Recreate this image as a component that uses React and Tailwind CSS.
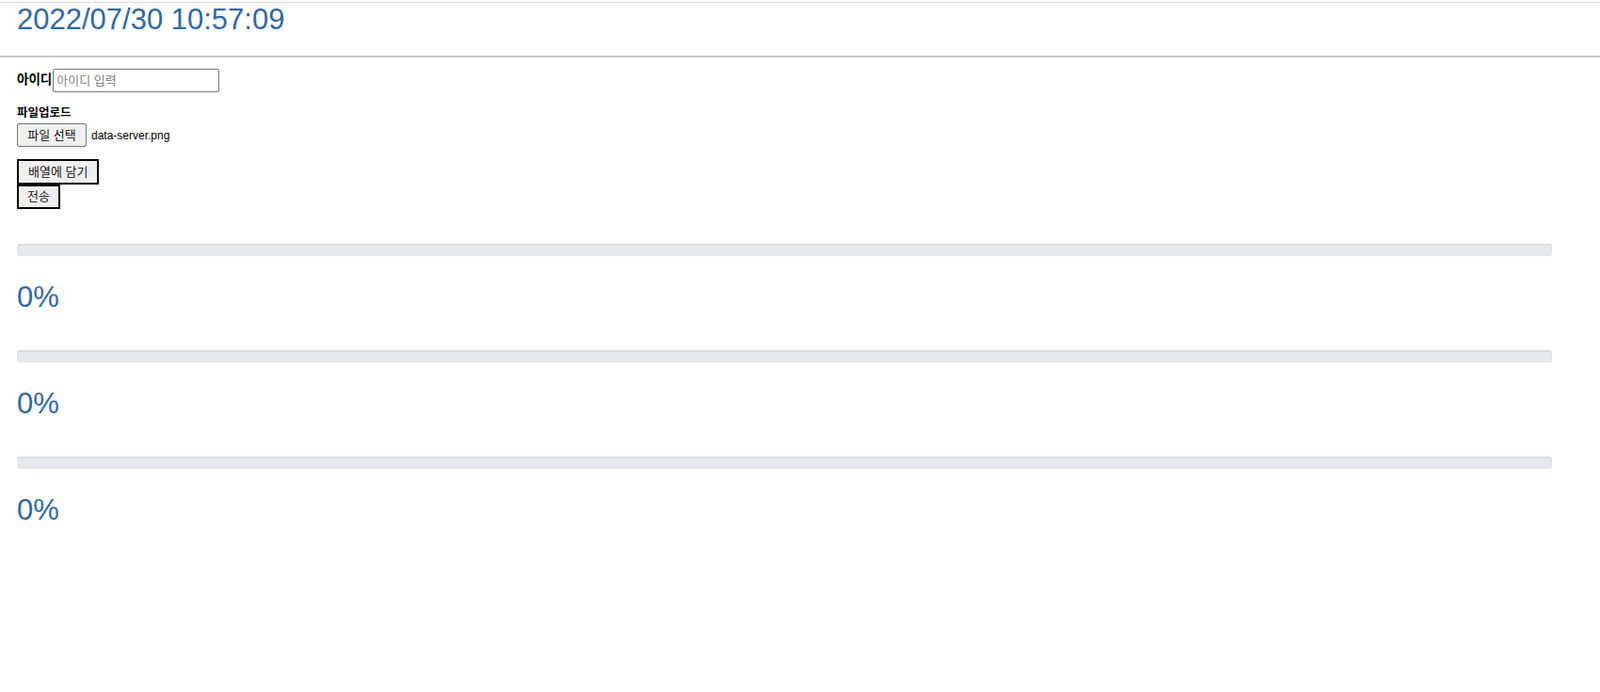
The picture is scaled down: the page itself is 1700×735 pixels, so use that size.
import React from "react";

const bars = [0, 0, 0];

export default function App() {
  return (
    <div className="min-h-[735px] bg-white pt-[2px] font-['Liberation_Sans','Noto_Sans_CJK_KR',sans-serif] text-black">
      {/* header */}
      <div className="border-t border-b-2 border-t-[#dddddd] border-b-[#c8c8c8] h-[59px] pl-[18px]">
        <h1 className="text-[31px] leading-[36px] text-[#3069a5]">2022/07/30 10:57:09</h1>
      </div>

      <div className="pl-[18px] pr-[51px]">
        {/* id row */}
        <div className="mt-[12px] flex items-center">
          <label className="text-[13.5px] font-bold">아이디</label>
          <input
            className="ml-[1px] w-[177px] h-[25px] border border-[#767676] rounded-[2px] px-[3px] text-[13px] font-[350] outline-none placeholder:text-[#757575]"
            placeholder="아이디 입력"
          />
        </div>

        {/* file upload */}
        <div className="mt-[13px] text-[12.5px] font-bold leading-[18px]">파일업로드</div>
        <div className="mt-[2px] flex items-center">
          <button className="h-[25px] w-[74px] border border-[#767676] rounded-[2px] bg-[#efefef] text-[13px] font-[350]">
            파일 선택
          </button>
          <span className="ml-[5px] text-[12px]">data-server.png</span>
        </div>

        {/* buttons */}
        <div className="mt-[13px] flex flex-col items-start">
          <button className="h-[27px] px-[10px] border-2 border-black bg-[#efefef] text-[13px] font-[350]">배열에 담기</button>
          <button className="h-[26px] px-[9px] border-2 border-black bg-[#efefef] text-[13px] font-[350]">전송</button>
        </div>

        {/* progress */}
        <div className="mt-[37px] flex flex-col">
          {bars.map((v, i) => (
            <div key={i} className="h-[113px]">
              <div className="h-[13px] rounded-[3px] bg-[#e6e9ec] shadow-[inset_0_1px_2px_rgba(0,0,0,0.1)] overflow-hidden">
                <div className="h-full bg-[#3069a5]" style={{ width: `${v}%` }} />
              </div>
              <div className="mt-[26px] text-[31px] leading-[36px] text-[#3069a5]">{v}%</div>
            </div>
          ))}
        </div>
      </div>
    </div>
  );
}
